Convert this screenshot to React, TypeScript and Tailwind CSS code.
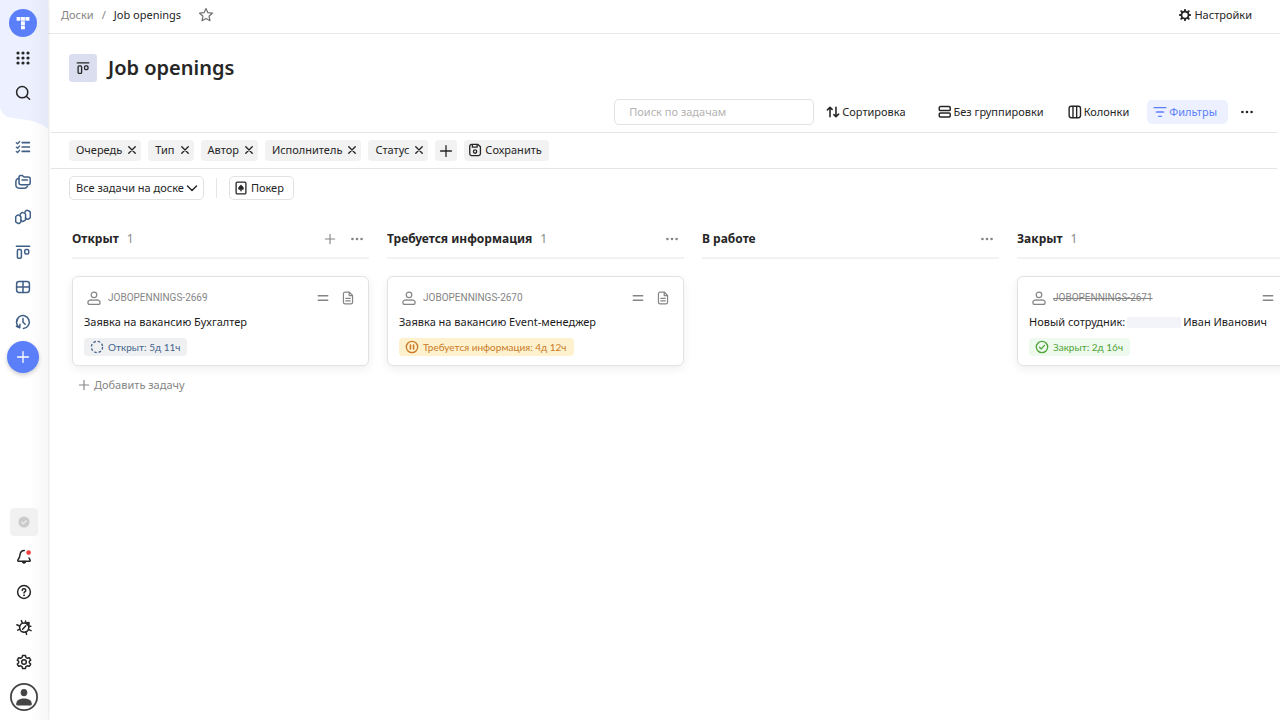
import React from "react";

type IconProps = { className?: string };

function Icon({ className = "size-4", children }: IconProps & { children: React.ReactNode }) {
  return (
    <svg
      viewBox="0 0 16 16"
      className={`shrink-0 ${className}`}
      fill="none"
      stroke="currentColor"
      strokeWidth="1.5"
      strokeLinecap="round"
      strokeLinejoin="round"
      aria-hidden="true"
    >
      {children}
    </svg>
  );
}

const LogoMark = () => (
  <svg viewBox="0 0 28 28" className="size-7" aria-hidden="true">
    <circle cx="14" cy="14" r="14" fill="#5b7ff8" />
    <g fill="#fff">
      <rect x="7.6" y="8" width="3.9" height="3.7" />
      <rect x="12" y="8" width="3.9" height="3.7" />
      <rect x="16.4" y="8" width="4" height="3.7" />
      <rect x="12" y="12.3" width="3.9" height="3.7" />
      <rect x="12" y="16.6" width="3.9" height="3.7" />
    </g>
  </svg>
);

const AppsIcon = () => (
  <Icon className="size-4">
    <g fill="currentColor" stroke="none">
      {[3, 8, 13].map((y) => [3, 8, 13].map((x) => <circle key={`${x}-${y}`} cx={x} cy={y} r="1.6" />))}
    </g>
  </Icon>
);

const SearchIcon = () => (
  <Icon className="size-4">
    <circle cx="7.2" cy="7.2" r="5.6" />
    <path d="M11.5 11.5 14.6 14.3" />
  </Icon>
);

const ChecklistIcon = () => (
  <Icon className="size-4">
    <path d="M7.2 3.6H14.4M7.2 8H14.4M7.2 12.4H14.4" strokeWidth="1.7" />
    <path d="M1.3 3.7 2.6 4.8 4.6 2.5M1.3 8.1 2.6 9.2 4.6 6.9M1.3 12.5 2.6 13.6 4.6 11.3" strokeWidth="1.3" />
  </Icon>
);

const FoldersIcon = () => (
  <Icon className="size-4">
    <path d="M4 4.2V3.3A1.8 1.8 0 0 1 5.8 1.5H7.4L9 3H13.2A2 2 0 0 1 15.2 5V8.8A2 2 0 0 1 13.2 10.8H6A2 2 0 0 1 4 8.8ZM7 6H12.4" />
    <path d="M3.9 4.6A2.6 2.6 0 0 0 .9 7.2V11.2A3 3 0 0 0 3.9 14.2H9.8A2.8 2.8 0 0 0 12.4 12.2" />
  </Icon>
);

const StackIcon = () => (
  <Icon className="size-4">
    <path d="M10 3.2Q9.9 2.5 10.5 2.1L11.6 1.4Q12.1 1 12.7 1.4L14.7 2.5Q15.3 2.8 15.3 3.5V8Q15.3 8.7 14.8 9.1L13.3 10.1Q12.7 10.5 12.1 10.2L10.5 9.2" />
    <path d="M10.6 5.4Q10.5 4.7 9.9 4.4L8.2 3.6Q7.6 3.3 7 3.7L5.7 4.6Q5.1 5 5.2 5.7M10.6 5.4V10.2Q10.6 10.9 10 11.3L8.6 12.2Q8 12.6 7.4 12.3L5.9 11.4" />
    <path d="M5.9 8Q5.9 7.3 5.3 7L3.6 6.1Q3 5.8 2.4 6.2L1.3 7Q.7 7.4.7 8.1V12.2Q.7 12.9 1.3 13.3L3 14.4Q3.6 14.8 4.2 14.4L5.3 13.6Q5.9 13.2 5.9 12.5Z" />
  </Icon>
);

const BoardIcon = ({ className = "size-4" }: IconProps) => (
  <Icon className={className}>
    <path d="M1.4 2.2H14.6" />
    <rect x="2.4" y="5.6" width="4" height="8.6" rx="1.2" />
    <rect x="9.8" y="5.6" width="3.9" height="4.3" rx="1.2" />
  </Icon>
);

const TableIcon = () => (
  <Icon className="size-4">
    <rect x="1.6" y="2.5" width="12.8" height="11" rx="2.4" />
    <path d="M8 2.5V13.5M1.6 8H14.4" />
  </Icon>
);

const HistoryIcon = () => (
  <Icon className="size-4">
    <path d="M4.4 13.4A6.4 6.4 0 1 1 8.4 14.4M8 4.6V8.2L10.2 10.3" />
    <path d="M1.4 12.2 4.7 13.7 5 10.2M2.6 5.3 2 7" />
  </Icon>
);

const PlusIcon = ({ className = "size-4" }: IconProps) => (
  <Icon className={className}>
    <path d="M8 1.8V14.2M1.8 8H14.2" />
  </Icon>
);

const SealIcon = () => (
  <Icon className="size-3">
    <circle cx="8" cy="8" r="7.4" fill="#cbcbcb" stroke="none" />
    <path d="M5 8.3 7.1 10.4 11 6.1" stroke="#f1f1f1" />
  </Icon>
);

const BellIcon = () => (
  <Icon className="size-4">
    <path d="M8.3 1.6C5.6 1.6 4.3 3.4 4 5.8 3.7 8.4 3.2 9.4 2 10.8 1.5 11.5 1.9 12.3 2.8 12.3H13.2C14.1 12.3 14.5 11.5 14 10.8L13 9" />
    <path d="M6 12.8C6.4 14.8 9.6 14.8 10 12.8Z" fill="currentColor" strokeWidth="1" />
    <circle cx="12.6" cy="3.6" r="2.3" fill="#f33d3d" stroke="none" />
  </Icon>
);

const HelpIcon = () => (
  <Icon className="size-4">
    <circle cx="8" cy="8" r="6.4" />
    <path d="M6.2 6.4C6.3 4.2 9.8 4.3 9.8 6.4 9.8 7.6 8 7.7 8 9.1" />
    <circle cx="8" cy="11.3" r=".5" fill="currentColor" strokeWidth=".9" />
  </Icon>
);

const BugIcon = () => (
  <Icon className="size-4">
    <circle cx="8.2" cy="8.6" r="4.6" />
    <path d="M9.8 6.8 6.6 10.2" />
    <path d="M10 4 13 3.4 12.8 6.8Z" fill="currentColor" />
    <path d="M6.4 4.2 5.4 1.6M9.4 3.6 9.6 2M3.6 7 .9 5.8M3.8 10.2 1.8 11.2M9.9 13 10.6 15.2M12.4 10.4 15 11.6M13 7.4 14.8 7.2" strokeWidth="1.5" />
  </Icon>
);

const CogIcon = () => (
  <Icon className="size-4">
    <path d="M6.6 1.4H9.4L9.9 3.4 11.4 4.3 13.3 3.7 14.7 6.1 13.3 7.3V8.8L14.7 10 13.3 12.3 11.4 11.8 9.9 12.6 9.4 14.6H6.6L6.1 12.6 4.6 11.8 2.7 12.3 1.3 10 2.7 8.8V7.3L1.3 6.1 2.7 3.7 4.6 4.3 6.1 3.4Z" />
    <circle cx="8" cy="8" r="2.3" />
  </Icon>
);

const AvatarIcon = () => (
  <svg viewBox="0 0 28 28" className="size-7" aria-hidden="true">
    <circle cx="14" cy="14" r="13.1" fill="#fff" stroke="#454545" strokeWidth="1.8" />
    <ellipse cx="14" cy="9.6" rx="3.3" ry="3.7" fill="#454545" />
    <path d="M6.2 21.6C6 17.8 8.8 15.6 14 15.6S22 17.8 21.8 21.6Q21.7 22.4 20.8 22.4H7.2Q6.3 22.4 6.2 21.6Z" fill="#454545" />
  </svg>
);

const StarIcon = () => (
  <Icon className="size-4">
    <path d="M8 1.6 9.9 5.7 14.4 6.2 11 9.2 12 13.7 8 11.4 4 13.7 5 9.2 1.6 6.2 6.1 5.7Z" strokeWidth="1.2" />
  </Icon>
);

const GearIcon = () => (
  <Icon className="size-[14px]">
    <circle cx="8" cy="8" r="4" strokeWidth="2" />
    <path d="M8 2.2V3.4M8 12.6V13.8M2.2 8H3.4M12.6 8H13.8M3.8 3.8 4.6 4.6M11.4 11.4 12.2 12.2M3.8 12.2 4.6 11.4M11.4 4.6 12.2 3.8" strokeWidth="2.4" />
  </Icon>
);

const SortIcon = () => (
  <Icon className="size-[14px]">
    <path d="M4.6 13.4V2.8M1.6 5.6 4.6 2.6 7 5M11.4 2.6V13.2M9 11 11.4 13.4 14.4 10.4" strokeWidth="1.8" />
  </Icon>
);

const GroupIcon = () => (
  <Icon className="size-[14px]">
    <rect x="1.4" y="1.8" width="12.6" height="4.6" rx="1.4" strokeWidth="1.7" />
    <rect x="1.4" y="9.2" width="12.6" height="4.6" rx="1.4" strokeWidth="1.7" />
  </Icon>
);

const ColumnsIcon = () => (
  <Icon className="size-[14px]">
    <rect x="1.3" y="1.5" width="13" height="13" rx="2.4" strokeWidth="1.6" />
    <path d="M5.7 1.7V14.3M9.9 1.7V14.3" strokeWidth="1.6" />
  </Icon>
);

const FilterIcon = () => (
  <Icon className="size-[14px]">
    <path d="M1.4 3H14.6M4 8H12M6.6 13H9.4" strokeWidth="1.7" />
  </Icon>
);

const DotsIcon = ({ className = "size-[14px]" }: IconProps) => (
  <Icon className={className}>
    <g fill="currentColor" stroke="none">
      <circle cx="2.8" cy="8" r="1.5" />
      <circle cx="8" cy="8" r="1.5" />
      <circle cx="13.2" cy="8" r="1.5" />
    </g>
  </Icon>
);

const CrossIcon = () => (
  <Icon className="size-[10px]">
    <path d="M2.8 2.8 13.2 13.2M13.2 2.8 2.8 13.2" strokeWidth="2.2" />
  </Icon>
);

const SaveIcon = () => (
  <Icon className="size-[14px]">
    <path d="M2 3.6A2 2 0 0 1 4 1.6H11.4L14.2 4.2V12.4A2 2 0 0 1 12.2 14.4H4A2 2 0 0 1 2 12.4ZM5 1.8V4.8H10.4V1.8" />
    <circle cx="8.1" cy="9.8" r="1.9" />
  </Icon>
);

const ChevronIcon = () => (
  <Icon className="size-3">
    <path d="M2 5.2 8 11.2 14 5.2" strokeWidth="1.9" />
  </Icon>
);

const PokerIcon = () => (
  <Icon className="size-[14px]">
    <rect x="2.4" y="1.3" width="11.2" height="13.4" rx="1.4" strokeWidth="1.5" />
    <path d="M8 4 C9 5.4 11.2 6.8 11.2 8.5 11.2 10 9.5 10.4 8.6 9.6L9 11.6H7L7.4 9.6C6.5 10.4 4.8 10 4.8 8.5 4.8 6.8 7 5.4 8 4Z" fill="currentColor" stroke="none" />
  </Icon>
);

const PersonIcon = () => (
  <Icon className="size-[14px]">
    <circle cx="8" cy="4.4" r="3.2" strokeWidth="1.4" />
    <path d="M1 13C1 10.9 3.4 10.2 5.4 10.1 7.1 10.6 8.9 10.6 10.6 10.1 12.6 10.2 15 10.9 15 13 15 14.6 14.2 15.2 12.8 15.2H3.2C1.8 15.2 1 14.6 1 13Z" strokeWidth="1.4" />
  </Icon>
);

const EqualsIcon = () => (
  <Icon className="size-3">
    <path d="M1.6 5H14.4M1.6 11H14.4" strokeWidth="1.7" />
  </Icon>
);

const DocIcon = () => (
  <Icon className="size-[14px]">
    <path d="M2.8 3.2A1.8 1.8 0 0 1 4.6 1.4H9.6L13.2 5V12.8A1.8 1.8 0 0 1 11.4 14.6H4.6A1.8 1.8 0 0 1 2.8 12.8ZM9.4 1.6V5.2H13M5.5 8.3H10.5M5.5 11.3H10.5" strokeWidth="1.4" />
  </Icon>
);

const OpenStatusIcon = () => (
  <Icon className="size-[14px]">
    <circle cx="8" cy="8" r="6.4" strokeDasharray="2.9 2.13" strokeLinecap="butt" />
  </Icon>
);

const PauseStatusIcon = () => (
  <Icon className="size-[14px]">
    <circle cx="8" cy="8" r="6.5" />
    <path d="M6.2 5.8V10.2M9.8 5.8V10.2" strokeWidth="1.8" />
  </Icon>
);

const DoneStatusIcon = () => (
  <Icon className="size-[14px]">
    <circle cx="8" cy="8" r="6.5" />
    <path d="M5.2 8.2 7.2 10.2 10.8 6.1" />
  </Icon>
);

function NavItem({ label, children }: { label: string; children: React.ReactNode }) {
  return (
    <button type="button" aria-label={label} className="flex h-[35px] w-full items-center justify-center">
      {children}
    </button>
  );
}

function Sidebar() {
  return (
    <nav className="relative z-10 flex w-12 shrink-0 flex-col justify-between bg-gradient-to-r from-white from-60% to-[#f7f7f7] pt-[5px] pb-[6px] text-[#262626] shadow-[1px_0_2px_rgba(0,0,0,0.10)]">
      <svg viewBox="0 0 48 130" className="absolute top-0 left-0 h-[130px] w-12" aria-hidden="true">
        <defs>
          <linearGradient id="navTop" x1="0" x2="1" y1="0" y2="0">
            <stop offset="0.6" stopColor="#edf1ff" />
            <stop offset="1" stopColor="#e4e9f7" />
          </linearGradient>
        </defs>
        <path d="M0 0H48V129C42 124 36 121.5 28 120.3L10 117.6C4 116.5 1 112 0 107Z" fill="url(#navTop)" />
      </svg>
      <div className="relative flex flex-col pr-[2px]">
        <NavItem label="Tracker"><LogoMark /></NavItem>
        <NavItem label="Сервисы"><AppsIcon /></NavItem>
        <NavItem label="Поиск"><SearchIcon /></NavItem>
        <div className="mt-[19px] flex flex-col text-[#3f5f86]">
          <NavItem label="Задачи"><ChecklistIcon /></NavItem>
          <NavItem label="Проекты"><FoldersIcon /></NavItem>
          <NavItem label="Очереди"><StackIcon /></NavItem>
          <NavItem label="Доски"><BoardIcon /></NavItem>
          <NavItem label="Дашборды"><TableIcon /></NavItem>
          <NavItem label="История"><HistoryIcon /></NavItem>
        </div>
        <NavItem label="Создать">
          <span className="flex size-8 shrink-0 items-center justify-center rounded-full bg-[#5b7ff8] text-white shadow-[0_2px_4px_rgba(0,0,0,0.2)]">
            <PlusIcon className="size-[14px]" />
          </span>
        </NavItem>
      </div>
      <div className="flex flex-col">
        <NavItem label="Статус">
          <span className="flex size-7 items-center justify-center rounded-sm bg-[#f1f1f1]"><SealIcon /></span>
        </NavItem>
        <NavItem label="Уведомления"><BellIcon /></NavItem>
        <NavItem label="Помощь"><HelpIcon /></NavItem>
        <NavItem label="Сообщить об ошибке"><BugIcon /></NavItem>
        <NavItem label="Параметры"><CogIcon /></NavItem>
        <NavItem label="Профиль"><AvatarIcon /></NavItem>
      </div>
    </nav>
  );
}

function ToolButton({ icon, children }: { icon: React.ReactNode; children: React.ReactNode }) {
  return (
    <button type="button" className="flex h-6 items-center gap-[2px]">
      {icon}
      {children}
    </button>
  );
}

const filters = ["Очередь", "Тип", "Автор", "Исполнитель", "Статус"];

function FilterBar() {
  return (
    <div className="ml-[3px] mr-[3px] flex items-center gap-[7px] border-y border-[#e5e5e5] py-[7px] pl-[18px]">
      {filters.map((name) => (
        <span key={name} className="flex h-[21px] items-center gap-[5px] rounded bg-[#f2f2f2] pr-1 pb-px pl-[7px]">
          {name}
          <button type="button" aria-label={`Убрать фильтр ${name}`}><CrossIcon /></button>
        </span>
      ))}
      <button type="button" aria-label="Добавить фильтр" className="flex h-[21px] w-[22px] items-center justify-center rounded bg-[#f2f2f2]">
        <PlusIcon className="size-[14px]" />
      </button>
      <button type="button" className="flex h-[21px] items-center gap-[3px] rounded bg-[#f2f2f2] pr-[7px] pb-px pl-1">
        <SaveIcon />
        Сохранить
      </button>
    </div>
  );
}

type Task = {
  id: string;
  closed?: boolean;
  title: React.ReactNode;
  status: string;
  statusIcon: React.ReactNode;
  statusClass: string;
};

function Card({ task }: { task: Task }) {
  return (
    <article className="flex flex-col items-start rounded-md border border-[#e2e2e2] bg-white px-[11px] pt-[10px] pb-[9px] shadow-[0_3px_10px_rgba(0,0,0,0.07)]">
      <div className="flex h-[22px] w-full items-center gap-[7px] pr-[2px] pl-[3px] text-[#858585]">
        <PersonIcon />
        <a href="#" className={task.closed ? "font-['Roboto',sans-serif] text-[10px] line-through" : "font-['Roboto',sans-serif] text-[10px]"}>
          {task.id}
        </a>
        <span className="ml-auto flex items-center gap-3">
          <EqualsIcon />
          <DocIcon />
        </span>
      </div>
      <h3 className="mt-[3px] flex h-5 items-center whitespace-nowrap text-[#1c1c1c]">{task.title}</h3>
      <span className={`mt-[6px] flex h-[18px] items-center gap-1 rounded pr-[7px] pl-[6px] font-['Lato','Noto_Sans',sans-serif] text-[10px] whitespace-nowrap ${task.statusClass}`}>
        {task.statusIcon}
        {task.status}
      </span>
    </article>
  );
}

type ColumnData = { name: string; count?: number; canAdd?: boolean; task?: Task };

const columns: ColumnData[] = [
  {
    name: "Открыт",
    count: 1,
    canAdd: true,
    task: {
      id: "JOBOPENNINGS-2669",
      title: "Заявка на вакансию Бухгалтер",
      status: "Открыт: 5д 11ч",
      statusIcon: <OpenStatusIcon />,
      statusClass: "bg-[#eff0f2] text-[#45658c]",
    },
  },
  {
    name: "Требуется информация",
    count: 1,
    task: {
      id: "JOBOPENNINGS-2670",
      title: "Заявка на вакансию Event-менеджер",
      status: "Требуется информация: 4д 12ч",
      statusIcon: <PauseStatusIcon />,
      statusClass: "bg-[#fdf2cd] text-[#ca7a29]",
    },
  },
  { name: "В работе" },
  {
    name: "Закрыт",
    count: 1,
    task: {
      id: "JOBOPENNINGS-2671",
      closed: true,
      title: (
        <>
          Новый сотрудник:
          <span className="mr-[2px] ml-[2px] h-[11px] w-[54px] rounded-xs bg-[#f3f4f9]" />
          Иван Иванович
        </>
      ),
      status: "Закрыт: 2д 16ч",
      statusIcon: <DoneStatusIcon />,
      statusClass: "bg-[#effaee] text-[#4da437]",
    },
  },
];

function Column({ data }: { data: ColumnData }) {
  return (
    <section className="w-[297px] shrink-0">
      <header className="mb-[17px] flex h-[39px] items-center gap-2 border-b-2 border-[#f2f2f2] pr-[5px]">
        <h2 className="text-[12px] font-bold whitespace-nowrap">{data.name}</h2>
        {data.count !== undefined && <span className="text-[12px] text-[#8a8a8a]">{data.count}</span>}
        <span className="ml-auto flex items-center gap-[14px] text-[#858585]">
          {data.canAdd && (
            <button type="button" aria-label="Добавить задачу в колонку"><PlusIcon className="size-3" /></button>
          )}
          <button type="button" aria-label="Действия с колонкой"><DotsIcon /></button>
        </span>
      </header>
      {data.task && <Card task={data.task} />}
      {data.canAdd && (
        <button type="button" className="mt-[9px] ml-[6px] flex h-5 items-center gap-1 text-[#858585]">
          <PlusIcon className="size-3" />
          Добавить задачу
        </button>
      )}
    </section>
  );
}

export default function App() {
  return (
    <div className="flex min-h-screen bg-white font-['Noto_Sans','Open_Sans',sans-serif] text-[11px] leading-4 text-[#262626]">
      <Sidebar />
      <main className="min-w-0 flex-1 overflow-hidden">
        <header className="flex h-[34px] items-center border-b border-[#e8e8e8] pr-7 pb-[3px] pl-[13px]">
          <nav aria-label="Навигация" className="flex items-center gap-2">
            <a href="#" className="text-[#858585]">Доски</a>
            <span className="text-[#858585]">/</span>
            <a href="#" className="text-[#1c1c1c]">Job openings</a>
          </nav>
          <button type="button" aria-label="В избранное" className="ml-[17px] text-[#707070]"><StarIcon /></button>
          <button type="button" className="ml-auto flex items-center gap-[2px]">
            <GearIcon />
            Настройки
          </button>
        </header>

        <div className="flex items-center gap-[11px] pt-5 pl-[21px]">
          <span className="flex size-7 items-center justify-center rounded-[3px] bg-[#dbdeef]">
            <BoardIcon className="size-[14px]" />
          </span>
          <h1 className="text-[20px] leading-7 font-semibold">Job openings</h1>
        </div>

        <div className="mt-[17px] mb-[7px] flex items-center justify-end pr-[26px]">
          <input
            type="search"
            aria-label="Поиск по задачам"
            placeholder="Поиск по задачам"
            className="mr-3 h-[26px] w-[200px] rounded-[5px] border border-[#e2e2e2] px-[14px] pb-px outline-none placeholder:text-[#b3b3b3]"
          />
          <div className="flex items-center gap-8">
            <ToolButton icon={<SortIcon />}>Сортировка</ToolButton>
            <div className="flex items-center gap-6">
              <ToolButton icon={<GroupIcon />}>Без группировки</ToolButton>
              <ToolButton icon={<ColumnsIcon />}>Колонки</ToolButton>
            </div>
          </div>
          <button type="button" className="mr-3 ml-[18px] flex h-6 items-center gap-[2px] rounded-[5px] bg-[#edf1ff] pr-[11px] pl-[6px] text-[#5b7ff8]">
            <FilterIcon />
            Фильтры
          </button>
          <button type="button" aria-label="Ещё"><DotsIcon /></button>
        </div>

        <FilterBar />

        <div className="flex items-center pt-[7px] pl-[21px]">
          <button type="button" aria-haspopup="listbox" className="flex h-6 items-center gap-[2px] rounded-[5px] border border-[#e2e2e2] pr-[5px] pl-[6px]">
            Все задачи на доске
            <ChevronIcon />
          </button>
          <span className="mx-3 h-5 w-px bg-[#e5e5e5]" />
          <button type="button" className="flex h-6 items-center gap-[3px] rounded-[5px] border border-[#e2e2e2] pr-[9px] pl-1">
            <PokerIcon />
            Покер
          </button>
        </div>

        <div className="flex gap-[18px] pt-5 pl-6 pb-8">
          {columns.map((column) => (
            <Column key={column.name} data={column} />
          ))}
        </div>
      </main>
    </div>
  );
}
